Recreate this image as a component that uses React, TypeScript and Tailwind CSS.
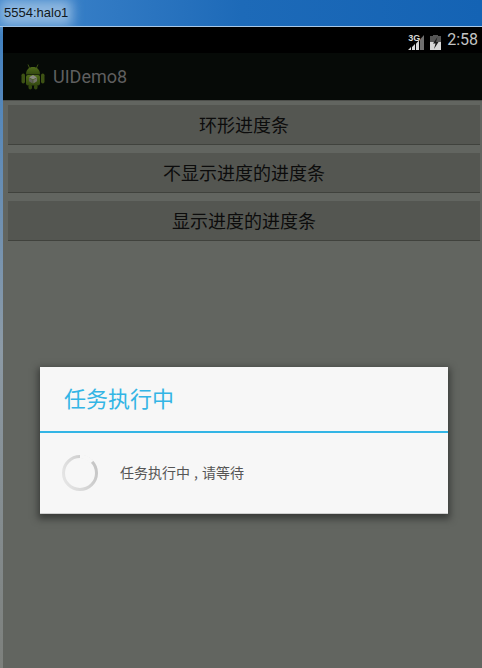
const BUTTONS = ["环形进度条", "不显示进度的进度条", "显示进度的进度条"];

const CJK = "font-['Noto_Sans_CJK_SC','Liberation_Sans',sans-serif]";

function AndroidIcon() {
  return (
    <svg width="26" height="29" viewBox="0 0 26 28" aria-hidden>
      <defs>
        <linearGradient id="droid" x1="0" y1="0" x2="0" y2="1">
          <stop offset="0%" stopColor="#4f6b1a" />
          <stop offset="100%" stopColor="#33480f" />
        </linearGradient>
      </defs>
      <path d="M8 2 L9.5 5.5 M18 2 L16.5 5.5" stroke="#3d5214" strokeWidth="1" />
      <path d="M6 12 C6 7 9 4.5 13 4.5 C17 4.5 20 7 20 12 Z" fill="url(#droid)" />
      <rect x="6" y="12.5" width="14" height="10.5" rx="2" fill="url(#droid)" />
      <rect x="1.5" y="11" width="3.5" height="10" rx="1.7" fill="#3d5214" />
      <rect x="21" y="11" width="3.5" height="10" rx="1.7" fill="#3d5214" />
      <rect x="8.5" y="22" width="3.5" height="5" rx="1.7" fill="#33480f" />
      <rect x="14" y="22" width="3.5" height="5" rx="1.7" fill="#33480f" />
      <path d="M13 12.5 L17 14.7 L13 17 L9 14.7 Z" fill="#8a8a82" />
      <path d="M9 15.2 L12.7 17.4 L12.7 21 L9 18.8 Z" fill="#5f5f58" />
      <path d="M17 15.2 L13.3 17.4 L13.3 21 L17 18.8 Z" fill="#72726b" />
    </svg>
  );
}

function SignalIcon() {
  return (
    <svg width="16" height="16" viewBox="0 0 16 16" aria-hidden>
      <path d="M0 15 H3 V12 Z M4 15 H7 V9 L4 12 Z" fill="#d8d8d8" />
      <path d="M8 15 H11 V5.5 L8 8.5 Z" fill="#d8d8d8" />
      <path d="M12 15 H16 V0 L12 4.5 Z" fill="#707070" />
    </svg>
  );
}

function BatteryIcon() {
  return (
    <svg width="11" height="15" viewBox="0 0 11 15" aria-hidden>
      <rect x="3" y="0" width="5" height="1.5" fill="#555" />
      <rect x="0" y="1" width="11" height="6" fill="#555" />
      <rect x="0" y="7" width="11" height="8" fill="#d6d6d6" />
      <path d="M7.5 2 L3 8.5 H5.5 L4 14 L8.5 7 H6 Z" fill="#1a1a1a" />
    </svg>
  );
}

export default function App() {
  return (
    <div className="flex h-[668px] w-[482px] flex-col overflow-hidden bg-[#626560] font-['Liberation_Sans',sans-serif]">
      <div className="relative h-[26px] shrink-0 bg-gradient-to-r from-[#3f86cc] via-[#1d6ab8] to-[#1463b4]">
        <div className="absolute left-0 top-0 h-[26px] w-[72px] bg-[#8fb8e0] blur-[6px]" />
        <span className="relative ml-[4px] block text-[13px] leading-[25px] text-[#101820]">5554:halo1</span>
      </div>
      <div className="h-px shrink-0 bg-[#a9c8e6]" />

      <div className="flex min-h-0 flex-1">
        <div className="w-[3px] shrink-0 bg-gradient-to-b from-[#3f80c0] via-[#8c9aa6] to-[#7d807c]" />

        <div className="relative min-w-0 flex-1">
          <div className="flex h-[26px] items-center justify-end bg-black pr-[4px]">
            <div className="relative mt-[5px] h-[16px] w-[16px]">
              <SignalIcon />
              <span className="absolute left-0 top-[-1px] text-[9px] font-bold leading-[9px] text-[#d8d8d8]">3G</span>
            </div>
            <div className="ml-[6px] mt-[4px] flex">
              <BatteryIcon />
            </div>
            <span className="ml-[6px] font-['Roboto',sans-serif] text-[16px] leading-[26px] text-[#c4c4c4]">2:58</span>
          </div>

          <div className="flex h-[47px] items-center bg-[#060a07] pl-[17px]">
            <AndroidIcon />
            <span className="ml-[7px] font-['Roboto',sans-serif] text-[18px] text-[#5f5f5f]">UIDemo8</span>
          </div>

          <div className="h-px bg-[#4d4f4b]" />

          <div className="flex flex-col gap-[8px] pl-[5px] pr-[2px] pt-[4px]">
            {BUTTONS.map((label) => (
              <div
                key={label}
                className={`flex h-[40px] items-center justify-center border-b border-[#40423d] bg-[#545651] pb-[2px] text-[18px] leading-none text-[#0c0c0c] ${CJK}`}
              >
                {label}
              </div>
            ))}
          </div>

          <div className="absolute left-[37px] top-[340px] flex h-[147px] w-[408px] flex-col border-b border-[#cfcfcf] bg-[#f7f7f7] shadow-[0_3px_7px_2px_rgba(30,32,30,0.6)]">
            <div className={`flex h-[64px] items-center pb-[4px] pl-[24px] text-[22px] leading-none text-[#33b5e5] ${CJK}`}>任务执行中</div>
            <div className="h-[2px] bg-[#33b5e5]" />
            <div className="flex flex-1 items-center pl-[21px]">
              <svg width="38" height="38" viewBox="0 0 38 38" aria-hidden>
                <defs>
                  <linearGradient id="spin" x1="1" y1="0.2" x2="0" y2="0.6">
                    <stop offset="0%" stopColor="#c4c4c4" />
                    <stop offset="100%" stopColor="#e4e4e4" />
                  </linearGradient>
                </defs>
                <circle cx="19" cy="19" r="16.5" fill="none" stroke="url(#spin)" strokeWidth="3" />
                <path d="M19 2.5 A16.5 16.5 0 0 1 31 8" fill="none" stroke="#f7f7f7" strokeWidth="4" />
              </svg>
              <span className={`mb-[2px] ml-[21px] text-[14px] leading-none text-[#555555] ${CJK}`}>
                任务执行中<span className="mx-[4px]">,</span>请等待
              </span>
            </div>
          </div>
        </div>
      </div>
    </div>
  );
}
